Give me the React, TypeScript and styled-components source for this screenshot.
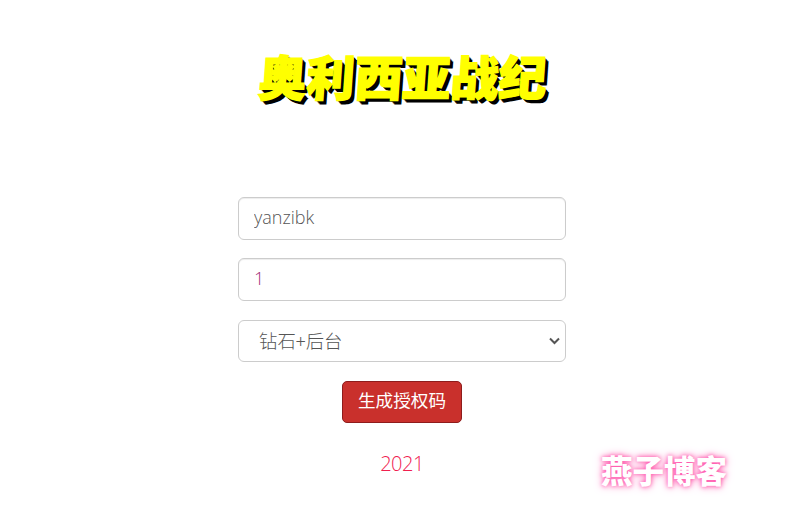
import React from 'react'
import styled, { createGlobalStyle } from 'styled-components'

const GlobalStyle = createGlobalStyle`
  html, body {
    margin: 0;
    padding: 0;
    background: #fff;
    font-family: "Open Sans", "Noto Sans CJK SC", sans-serif;
  }
`

const Page = styled.main`
  position: relative;
  box-sizing: border-box;
  width: 802px;
  height: 531px;
  padding-left: 2px;
  overflow: hidden;
  display: flex;
  flex-direction: column;
  align-items: center;
`

const Title = styled.h1`
  margin: 40px 4px 0 0;
  height: 157px;
  font-family: "Noto Sans CJK SC", sans-serif;
  font-size: 48px;
  line-height: 70px;
  font-weight: 900;
  color: #ffff00;
  transform: skewX(-4deg);
  -webkit-text-stroke: 1.5px #ffff00;
  text-shadow: 1px 1px 0 #000, 2px 2px 0 #000, 3px 3px 0 #000, 4px 4px 0 #000;
`

const Form = styled.form`
  width: 328px;
  display: flex;
  flex-direction: column;
  align-items: center;
  gap: 18px;
`

const Field = styled.input<{ $tint?: string }>`
  box-sizing: border-box;
  width: 100%;
  height: 43px;
  padding: 0 15px 3px;
  border: 1px solid #ccc;
  border-radius: 6px;
  box-shadow: inset 0 1px 1px rgba(0, 0, 0, 0.075);
  background: #fff;
  font-family: "Open Sans", "Noto Sans CJK SC", sans-serif;
  font-size: 18px;
  font-weight: 300;
  color: ${p => p.$tint || '#555'};
  outline: none;
`

const SelectWrap = styled.div`
  position: relative;
  width: 100%;
  height: 42px;
  margin: 1px 0;
`

const Select = styled.select`
  box-sizing: border-box;
  width: 100%;
  height: 42px;
  padding: 0 16px 2px;
  border: 1px solid #ccc;
  border-radius: 6px;
  background: #fff;
  appearance: none;
  font-family: "Noto Sans CJK SC", sans-serif;
  font-size: 18.4px;
  font-weight: 300;
  color: #555;
  outline: none;
`

const Chevron = styled.svg`
  position: absolute;
  top: 17px;
  right: 6px;
  width: 11px;
  height: 8px;
  pointer-events: none;
`

const Submit = styled.button`
  width: 120px;
  height: 42px;
  border: 1px solid #8e1c1c;
  border-radius: 5px;
  background: #c9302c;
  color: #fff;
  font-family: "Noto Sans CJK SC", sans-serif;
  font-size: 17.6px;
  line-height: 24px;
  font-weight: 400;
  padding: 0 0 4px;
`

const Year = styled.div`
  margin-top: 26px;
  font-size: 20px;
  line-height: 30px;
  font-weight: 300;
  letter-spacing: -0.5px;
  color: #f0204f;
`

const Watermark = styled.div`
  position: absolute;
  left: 601px;
  top: 446px;
  font-family: "Noto Sans CJK SC", sans-serif;
  font-size: 31.5px;
  line-height: 46px;
  font-weight: 900;
  color: #fff;
  text-shadow: 0 0 4px #ff4fa8, 0 0 8px #ff7cc0;
`

export default function App() {
  return (
    <>
      <GlobalStyle />
      <Page>
        <Title>奥利西亚战纪</Title>
        <Form onSubmit={e => e.preventDefault()}>
          <Field type="text" defaultValue="yanzibk" />
          <Field type="text" defaultValue="1" $tint="#a02c78" />
          <SelectWrap>
            <Select defaultValue="3">
              <option value="3">&nbsp;钻石+后台</option>
            </Select>
            <Chevron viewBox="0 0 11 8">
              <path d="M1 1.5 L5.5 6 L10 1.5" fill="none" stroke="#555" strokeWidth="2" />
            </Chevron>
          </SelectWrap>
          <Submit type="submit">生成授权码</Submit>
        </Form>
        <Year>2021</Year>
        <Watermark>燕子博客</Watermark>
      </Page>
    </>
  )
}
